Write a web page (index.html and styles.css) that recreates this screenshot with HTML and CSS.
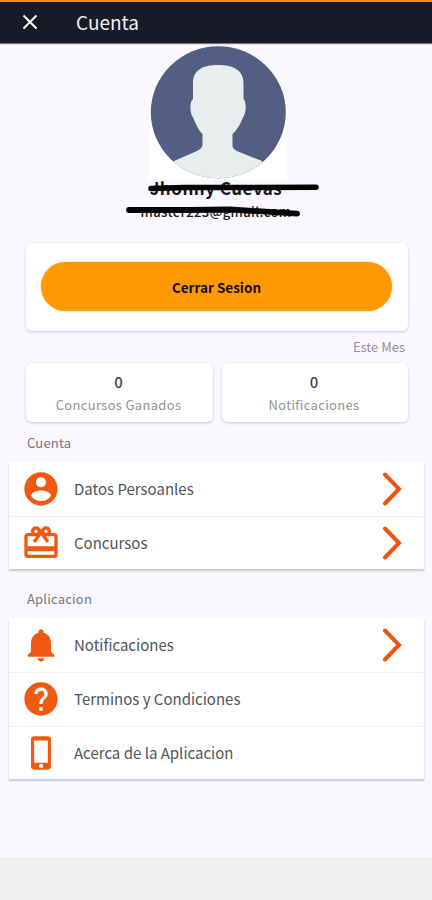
FILE: index.html
```html
<!DOCTYPE html>
<html lang="es">
<head>
<meta charset="utf-8">
<title>Cuenta</title>
<link rel="stylesheet" href="styles.css">
</head>
<body>
<header class="topbar">
  <svg class="close" viewBox="0 0 16 16"><path d="M1.500 1.500 14.500 14.500M14.500 1.500 1.500 14.500"/></svg>
  <h1>Cuenta</h1>
</header>
<main>
  <section class="profile">
    <svg class="avatar" viewBox="149 44 138 136">
      <defs><clipPath id="disc"><ellipse cx="218.300" cy="112.300" rx="67.500" ry="66"/></clipPath></defs>
      <rect x="149" y="110" width="138" height="70" fill="#fff"/>
      <g clip-path="url(#disc)">
        <rect x="149" y="44" width="138" height="136" fill="#535f82"/>
        <path fill="#e8eeee" d="M193 99V83C193 70 203 65 218 65S243.500 70 243.500 83V99C246.500 101 246.500 113 243 117.500C240.500 124 237 130 232.500 134V146C233 149 235 150 238 151.500L262 161V190H174V161L197 151C200 149.500 202 148 202.500 145V134C198 130 195.500 123 193 117.500C189.500 113 189.500 101 193 99Z"/>
      </g>
    </svg>
    <p class="name">Jhonny Cuevas</p>
    <p class="email">master223@gmail.com</p>
    <svg class="scribble" viewBox="120 176 206 48">
      <path stroke-width="5.500" d="M151 188.500 185 187.500 225 187.500 316 187.300"/>
      <path stroke-width="5.800" d="M129 210H190L230 209.500 297 213.600"/>
    </svg>
  </section>

  <section class="card logout"><button>Cerrar Sesion</button></section>

  <p class="period">Este Mes</p>
  <section class="stats">
    <div class="card stat"><strong>0</strong><span>Concursos Ganados</span></div>
    <div class="card stat"><strong>0</strong><span>Notificaciones</span></div>
  </section>

  <h2 class="first">Cuenta</h2>
  <ul class="list">
    <li>
      <svg class="icon" viewBox="0 0 24 24"><path d="M12 2C6.480 2 2 6.480 2 12s4.480 10 10 10 10-4.480 10-10S17.520 2 12 2zm0 3c1.660 0 3 1.340 3 3s-1.340 3-3 3-3-1.340-3-3 1.340-3 3-3zm0 14.200c-2.500 0-4.710-1.280-6-3.220.03-1.990 4-3.080 6-3.080 1.990 0 5.970 1.090 6 3.080-1.290 1.940-3.500 3.220-6 3.220z"/></svg>
      <span>Datos Persoanles</span>
      <svg class="chevron" viewBox="0 0 20 34"><path d="M3 2.500 17 17 3 31.500"/></svg>
    </li>
    <li>
      <svg class="icon" viewBox="0 0 24 24"><path d="M20 6h-2.180c.11-.31.18-.65.18-1 0-1.660-1.340-3-3-3-1.050 0-1.960.54-2.500 1.350l-.5.670-.5-.68C10.960 2.540 10.050 2 9 2 7.340 2 6 3.340 6 5c0 .35.070.69.180 1H4c-1.110 0-1.990.89-1.990 2L2 19c0 1.110.89 2 2 2h16c1.110 0 2-.89 2-2V8c0-1.110-.89-2-2-2zm-5-2c.55 0 1 .45 1 1s-.45 1-1 1-1-.45-1-1 .45-1 1-1zM9 4c.55 0 1 .45 1 1s-.45 1-1 1-1-.45-1-1 .45-1 1-1zm11 15H4v-2h16v2zm0-5H4V8h5.080L7 10.830 8.620 12 11 8.760l1-1.360 1 1.360L15.380 12 17 10.830 14.920 8H20v6z"/></svg>
      <span>Concursos</span>
      <svg class="chevron" viewBox="0 0 20 34"><path d="M3 2.500 17 17 3 31.500"/></svg>
    </li>
  </ul>

  <h2 class="second">Aplicacion</h2>
  <ul class="list">
    <li>
      <svg class="icon" viewBox="0 0 24 24"><path d="M12 22c1.100 0 2-.9 2-2h-4c0 1.100.89 2 2 2zm6-6v-5c0-3.070-1.640-5.640-4.500-6.320V4c0-.83-.67-1.500-1.500-1.500s-1.500.67-1.500 1.500v.68C7.630 5.360 6 7.920 6 11v5l-2 2v1h16v-1l-2-2z"/></svg>
      <span>Notificaciones</span>
      <svg class="chevron" viewBox="0 0 20 34"><path d="M3 2.500 17 17 3 31.500"/></svg>
    </li>
    <li>
      <svg class="icon" viewBox="0 0 24 24"><path d="M12 2C6.480 2 2 6.480 2 12s4.480 10 10 10 10-4.480 10-10S17.520 2 12 2zm1 17h-2v-2h2v2zm2.070-7.750l-.9.920C13.450 12.900 13 13.500 13 15h-2v-.5c0-1.100.45-2.100 1.170-2.830l1.240-1.260c.37-.36.59-.86.59-1.410 0-1.100-.9-2-2-2s-2 .9-2 2H8c0-2.210 1.790-4 4-4s4 1.790 4 4c0 .88-.36 1.680-.93 2.250z"/></svg>
      <span>Terminos y Condiciones</span>
    </li>
    <li>
      <svg class="icon" viewBox="0 0 24 24"><path fill-rule="evenodd" d="M8 2h8a2 2 0 0 1 2 2v16a2 2 0 0 1-2 2H8a2 2 0 0 1-2-2V4a2 2 0 0 1 2-2zM7.900 4.500h8.200v13.300H7.900zM12 18.500a1.250 1.250 0 1 0 0 2.500 1.250 1.250 0 0 0 0-2.500z"/></svg>
      <span>Acerca de la Aplicacion</span>
    </li>
  </ul>
</main>
<footer></footer>
</body>
</html>
```
FILE: styles.css
```css
* { box-sizing: border-box; margin: 0; padding: 0; }
body {
  width: 432px;
  height: 900px;
  overflow: hidden;
  display: flex;
  flex-direction: column;
  background: #faf8fe;
  font-family: "Noto Sans CJK SC", "Noto Sans", sans-serif;
  color: #50555a;
}
.topbar {
  height: 43px;
  flex: none;
  display: flex;
  align-items: center;
  padding: 0 0 2px 22px;
  background: #191a27;
  border-top: 2px solid #ee8b20;
  box-shadow: 0 1px 1px #777;
  color: #eef0f5;
}
.close { width: 16px; height: 16px; fill: none; stroke: #fff; stroke-width: 2; }
.topbar h1 { margin-left: 38px; font-size: 19px; line-height: 30px; font-weight: 400; letter-spacing: 0; }
main { flex: 1; }
.profile {
  position: relative;
  height: 200px;
  padding-top: 1px;
  display: flex;
  flex-direction: column;
  align-items: center;
  color: #17181c;
}
.avatar { width: 138px; height: 136px; flex: none; margin-left: 4px; }
.name { height: 20px; margin-top: -2px; font-size: 17px; line-height: 20px; font-weight: 700; letter-spacing: .5px; white-space: nowrap; }
.email { margin-top: 5px; font-size: 13px; line-height: 18px; font-weight: 500; letter-spacing: .4px; }
.scribble { position: absolute; left: 120px; top: 133px; width: 206px; height: 48px; fill: none; stroke: #050505; stroke-linecap: round; }
.card { background: #fff; border-radius: 6px; box-shadow: 0 1px 3px #0003; }
.logout { height: 88px; margin: 0 24px 0 26px; padding: 19px 16px 0 15px; }
.logout button {
  width: 100%;
  height: 49px;
  display: block;
  border: 0;
  border-radius: 25px;
  background: #ff9805;
  box-shadow: 0 0 2px #ff980599;
  font: 700 13.500px/20px "Noto Sans CJK SC", sans-serif;
  color: #161006;
}
.period { height: 32px; padding: 6px 27px 0 0; text-align: right; font-size: 13px; line-height: 20px; color: #929297; }
.stats { display: grid; grid-template-columns: 187px 186px; gap: 9px; margin-left: 26px; }
.stat { height: 59px; padding-top: 9px; display: flex; flex-direction: column; align-items: center; }
.stat strong { font-size: 15px; line-height: 20px; font-weight: 500; color: #444; }
.stat span { margin-top: 3px; font-size: 13px; line-height: 20px; letter-spacing: .33px; color: #929295; }
.stat strong, .stat span { margin-left: -2px; }
h2 { padding-left: 27px; font-size: 13px; line-height: 20px; font-weight: 400; letter-spacing: .2px; color: #75767b; }
.first { height: 40px; padding-top: 11px; }
.second { height: 49px; padding-top: 20px; }
.list { list-style: none; margin: 0 8px 0 9px; background: #fff; box-shadow: 0 2px 2px #0003; }
.list li { height: 54px; display: flex; align-items: center; padding: 0 22px 1px 12px; }
.list li + li { border-top: 1px solid #f2f1f5; }
.list li:last-child { height: 53px; padding-bottom: 0; }
.list span { flex: 1; margin-left: 13px; font-size: 15px; line-height: 24px; }
.icon { width: 40px; height: 40px; fill: #f15913; }
.chevron { width: 20px; height: 34px; fill: none; stroke: #f05412; stroke-width: 4; stroke-linecap: round; }
footer { height: 43px; flex: none; background: #f0f0f0; }
```
